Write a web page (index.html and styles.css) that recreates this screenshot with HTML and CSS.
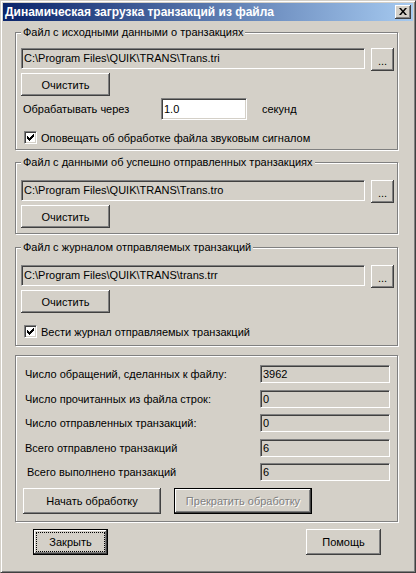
FILE: index.html
```html
<!DOCTYPE html>
<html lang="ru">
<head>
<meta charset="utf-8">
<title>Динамическая загрузка транзакций из файла</title>
<link rel="stylesheet" href="styles.css">
</head>
<body>
<div class="window">
  <div class="titlebar">
    <span class="title">Динамическая загрузка транзакций из файла</span>
    <span class="close-btn"><svg width="8" height="7" viewBox="0 0 8 7"><path d="M0 0h2l2 2.5L6 0h2L5 3.5 8 7H6L4 4.5 2 7H0l3-3.5z" fill="#000"/></svg></span>
  </div>
  <div class="client">
    <div class="group g1">
      <span class="legend">Файл с исходными данными о транзакциях</span>
      <div class="file-row">
        <div class="field path">C:\Program Files\QUIK\TRANS\Trans.tri</div>
        <button class="btn browse">...</button>
      </div>
      <button class="btn clear">Очистить</button>
      <div class="interval-row">
        <span class="interval-label">Обрабатывать через</span>
        <div class="edit">1.0</div>
        <span class="unit">секунд</span>
      </div>
      <div class="check-row">
        <span class="checkbox"><svg width="7" height="7" viewBox="0 0 7 7"><path d="M0 2h1v1h1v1h1V3h1V2h1V1h1V0h1v3H6v1H5v1H4v1H3v1H2V6H1V5H0z" fill="#000"/></svg></span>
        <span class="check-label">Оповещать об обработке файла звуковым сигналом</span>
      </div>
    </div>

    <div class="group g2">
      <span class="legend">Файл с данными об успешно отправленных транзакциях</span>
      <div class="file-row">
        <div class="field path">C:\Program Files\QUIK\TRANS\Trans.tro</div>
        <button class="btn browse">...</button>
      </div>
      <button class="btn clear">Очистить</button>
    </div>

    <div class="group g3">
      <span class="legend">Файл с журналом отправляемых транзакций</span>
      <div class="file-row">
        <div class="field path">C:\Program Files\QUIK\TRANS\trans.trr</div>
        <button class="btn browse">...</button>
      </div>
      <button class="btn clear">Очистить</button>
      <div class="check-row">
        <span class="checkbox"><svg width="7" height="7" viewBox="0 0 7 7"><path d="M0 2h1v1h1v1h1V3h1V2h1V1h1V0h1v3H6v1H5v1H4v1H3v1H2V6H1V5H0z" fill="#000"/></svg></span>
        <span class="check-label">Вести журнал отправляемых транзакций</span>
      </div>
    </div>

    <div class="group g4">
      <div class="stats">
        <div class="stat-row"><span class="stat-label">Число обращений, сделанных к файлу:</span><div class="field stat">3962</div></div>
        <div class="stat-row"><span class="stat-label">Число прочитанных из файла строк:</span><div class="field stat">0</div></div>
        <div class="stat-row"><span class="stat-label">Число отправленных транзакций:</span><div class="field stat">0</div></div>
        <div class="stat-row"><span class="stat-label">Всего отправлено транзакций</span><div class="field stat">6</div></div>
        <div class="stat-row"><span class="stat-label indent">Всего выполнено транзакций</span><div class="field stat">6</div></div>
      </div>
      <div class="action-row">
        <button class="btn action">Начать обработку</button>
        <button class="btn action default disabled">Прекратить обработку</button>
      </div>
    </div>

    <div class="bottom-row">
      <button class="btn dlg default focused"><span class="focus">Закрыть</span></button>
      <button class="btn dlg">Помощь</button>
    </div>
  </div>
</div>
</body>
</html>
```
FILE: styles.css
```css
* { box-sizing: border-box; }
html, body { margin: 0; padding: 0; }
body {
  width: 416px;
  height: 573px;
  background: #D4D0C8;
  font-family: "Liberation Sans", Arial, sans-serif;
  font-size: 11px;
  color: #000;
  overflow: hidden;
}
.window {
  width: 416px;
  height: 573px;
  background: #D4D0C8;
  border: 1px solid;
  border-color: #D4D0C8 #404040 #404040 #D4D0C8;
  box-shadow: inset 1px 1px 0 #fff, inset -1px -1px 0 #808080;
  padding: 2px;
  display: flex;
  flex-direction: column;
}
.titlebar {
  height: 18px;
  background: linear-gradient(to right, #0A246A, #A6CAF0);
  display: flex;
  align-items: center;
  justify-content: space-between;
  padding: 0 2px 0 2px;
}
.title {
  color: #fff;
  font-weight: bold;
  font-size: 12px;
  white-space: nowrap;
}
.close-btn {
  width: 16px;
  height: 14px;
  background: #D4D0C8;
  box-shadow: inset -1px -1px 0 #404040, inset 1px 1px 0 #fff, inset -2px -2px 0 #808080;
  display: flex;
  align-items: center;
  justify-content: center;
  padding-bottom: 1px;
}
.close-btn svg { display: block; }
.client {
  display: flex;
  flex-direction: column;
  padding-left: 12px;
}
.group {
  position: relative;
  width: 383px;
  border: 1px solid #808080;
  box-shadow: inset 1px 1px 0 #fff, 1px 1px 0 #fff;
  padding: 0 5px;
  display: flex;
  flex-direction: column;
  align-items: flex-start;
}
.legend {
  position: absolute;
  top: -7px;
  left: 5px;
  padding: 0 2px;
  line-height: 13px;
  background: #D4D0C8;
  white-space: nowrap;
}
.g1 { margin-top: 11px; height: 118px; padding-top: 15px; }
.g2 { margin-top: 12px; height: 72px; padding-top: 17px; }
.g3 { margin-top: 13px; height: 99px; padding-top: 17px; }
.g4 { margin-top: 9px; height: 167px; padding-top: 9px; }

.file-row { display: flex; gap: 6px; align-items: flex-start; }
.field {
  border: 1px solid;
  border-color: #808080 #fff #fff #808080;
  box-shadow: inset 1px 1px 0 #404040, inset -1px -1px 0 #D4D0C8;
  white-space: nowrap;
  overflow: hidden;
}
.path { width: 344px; height: 21px; line-height: 19px; padding-left: 2px; }

.btn {
  font: inherit;
  color: #000;
  background: #D4D0C8;
  border: none;
  padding: 0;
  margin: 0;
  box-shadow: inset -1px -1px 0 #404040, inset 1px 1px 0 #fff, inset -2px -2px 0 #808080;
  display: flex;
  align-items: center;
  justify-content: center;
}
.browse { width: 23px; height: 23px; padding-top: 2px; }
.clear { width: 89px; height: 23px; margin-top: 2px; }

.interval-row { display: flex; align-items: center; margin-top: 2px; height: 22px; }
.interval-label { width: 140px; padding-left: 2px; }
.edit {
  width: 86px;
  height: 22px;
  background: #fff;
  border: 1px solid;
  border-color: #808080 #fff #fff #808080;
  box-shadow: inset 1px 1px 0 #404040, inset -1px -1px 0 #D4D0C8;
  padding-left: 2px;
  line-height: 20px;
}
.unit { margin-left: 15px; }

.check-row { display: flex; align-items: center; margin-top: 11px; margin-left: 3px; height: 13px; }
.g3 .check-row { margin-top: 12px; }
.checkbox {
  width: 13px;
  height: 13px;
  background: #fff;
  border: 1px solid;
  border-color: #808080 #fff #fff #808080;
  box-shadow: inset 1px 1px 0 #404040, inset -1px -1px 0 #D4D0C8;
  display: flex;
  align-items: center;
  justify-content: center;
}
.checkbox svg { display: block; }
.check-label { margin-left: 4px; }

.stats { display: flex; flex-direction: column; gap: 6.5px; }
.stat-row { display: flex; align-items: center; height: 18px; }
.stat-label { width: 239px; padding-left: 4px; }
.stat-label.indent { padding-left: 6px; }
.stat { width: 130px; height: 18px; line-height: 16px; padding-left: 2px; }

.action-row { display: flex; gap: 13px; margin-top: 7px; margin-left: 2px; }
.action { width: 138px; height: 26px; }
.default {
  border: 1px solid #000;
}
.disabled { color: #808080; text-shadow: 1px 1px 0 #fff; }

.bottom-row {
  width: 383px;
  display: flex;
  justify-content: space-between;
  padding: 0 17px 0 18px;
  margin-top: 7px;
}
.dlg { width: 75px; height: 26px; }
.focus {
  display: flex;
  align-items: center;
  justify-content: center;
  width: 67px;
  height: 18px;
  outline: 1px dotted #000;
}
```
